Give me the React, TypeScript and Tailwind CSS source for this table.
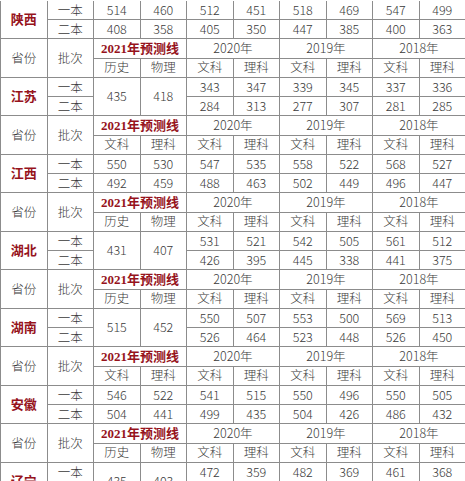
import React from 'react';

type Block = {
  name: string;
  subjects: [string, string];
  merged: boolean;
  first: string[];
  second: string[];
};

const blocks: Block[] = [
  { name: '江苏', subjects: ['历史', '物理'], merged: true, first: ['435', '418', '343', '347', '339', '345', '337', '336'], second: ['284', '313', '277', '307', '281', '285'] },
  { name: '江西', subjects: ['文科', '理科'], merged: false, first: ['550', '530', '547', '535', '558', '522', '568', '527'], second: ['492', '459', '488', '463', '502', '449', '496', '447'] },
  { name: '湖北', subjects: ['历史', '物理'], merged: true, first: ['431', '407', '531', '521', '542', '505', '561', '512'], second: ['426', '395', '445', '338', '441', '375'] },
  { name: '湖南', subjects: ['历史', '物理'], merged: true, first: ['515', '452', '550', '507', '553', '500', '569', '513'], second: ['526', '464', '523', '448', '526', '450'] },
  { name: '安徽', subjects: ['文科', '理科'], merged: false, first: ['546', '522', '541', '515', '550', '496', '550', '505'], second: ['504', '441', '499', '435', '504', '426', '486', '432'] },
  { name: '辽宁', subjects: ['历史', '物理'], merged: true, first: ['435', '403', '472', '359', '482', '369', '461', '368'], second: ['', '', '', '', '', ''] },
];

const cell = 'flex items-center justify-center border-r border-b border-[#8c8c8c] text-[12.5px] leading-none font-light text-[#3a3a3a] whitespace-nowrap';
const red = 'font-bold! text-[13px] text-[#96131c] [font-family:"Liberation_Serif","Noto_Sans_CJK_SC",serif]';

function Header({ subjects }: { subjects: [string, string] }) {
  return (
    <>
      <div className={`${cell} row-span-2`}>省份</div>
      <div className={`${cell} row-span-2`}>批次</div>
      <div className={`${cell} col-span-2 ${red}`}>2021年预测线</div>
      <div className={`${cell} col-span-2`}>2020年</div>
      <div className={`${cell} col-span-2`}>2019年</div>
      <div className={`${cell} col-span-2`}>2018年</div>
      <div className={cell}>{subjects[0]}</div>
      <div className={cell}>{subjects[1]}</div>
      {['文科', '理科', '文科', '理科', '文科', '理科'].map((s, i) => (
        <div key={i} className={cell}>{s}</div>
      ))}
    </>
  );
}

function Data({ block }: { block: Block }) {
  return (
    <>
      <div className={`${cell} row-span-2 ${red}`}>{block.name}</div>
      <div className={cell}>一本</div>
      {block.first.map((v, i) => (
        <div key={i} className={`${cell} ${block.merged && i < 2 ? 'row-span-2' : ''}`}>{v}</div>
      ))}
      <div className={cell}>二本</div>
      {block.second.map((v, i) => (
        <div key={i} className={cell}>{v}</div>
      ))}
    </>
  );
}

export default function App() {
  return (
    <div className="w-[465px] h-[481px] overflow-hidden bg-white [font-family:'Noto_Sans_CJK_SC',sans-serif]">
      <div className="grid grid-cols-[repeat(10,46.5px)] auto-rows-[19.25px] border-l border-[#8c8c8c] mt-[0.75px]">
        {/* 陕西 continues from above */}
        <div className={`${cell} row-span-2 ${red}`}>陕西</div>
        <div className={cell}>一本</div>
        {['514', '460', '512', '451', '518', '469', '547', '499'].map((v, i) => (
          <div key={i} className={cell}>{v}</div>
        ))}
        <div className={cell}>二本</div>
        {['408', '358', '405', '350', '447', '385', '400', '363'].map((v, i) => (
          <div key={i} className={cell}>{v}</div>
        ))}
        {blocks.map((b) => (
          <React.Fragment key={b.name}>
            <Header subjects={b.subjects} />
            <Data block={b} />
          </React.Fragment>
        ))}
      </div>
    </div>
  );
}
